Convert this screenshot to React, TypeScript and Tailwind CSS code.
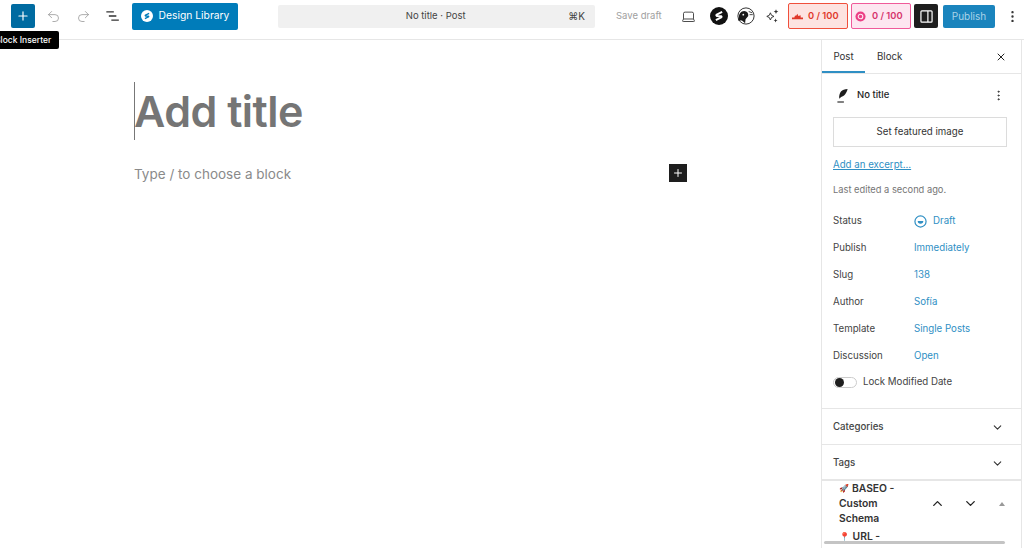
import { Plus, Undo2, Redo2, X, ChevronDown, ChevronUp, MoreVertical, Laptop } from "lucide-react";

const font = { fontFamily: "Inter, sans-serif" };

const rows = [
  ["Publish", "Immediately"],
  ["Slug", "138"],
  ["Author", "Sofía"],
  ["Template", "Single Posts"],
  ["Discussion", "Open"],
];

function Stackable({ className }: { className: string }) {
  return (
    <svg viewBox="0 0 20 20" className={className}>
      <circle cx="10" cy="10" r="10" fill="currentColor" />
      <path d="M13.5 5.5 L7.5 8.5 Q6.5 9.2 7.6 10 L12.3 10.2 Q13.4 10.9 12.4 11.6 L6.5 14.5" fill="none" stroke="white" strokeWidth="2.2" strokeLinejoin="round" />
    </svg>
  );
}

export default function App() {
  return (
    <div className="relative h-[548px] w-[1024px] overflow-hidden bg-white text-[#1e1e1e]" style={font}>
      {/* top bar */}
      <header className="flex h-10 items-center border-b border-[#e6e6e6] pb-[7px]">
        <button className="ml-[11px] flex h-6 w-6 items-center justify-center rounded-[2px] bg-[#006ba1] text-white">
          <Plus size={14} strokeWidth={2} />
        </button>
        <Undo2 size={15} strokeWidth={1.3} className="ml-[11px] text-[#9a9a9a]" />
        <Redo2 size={15} strokeWidth={1.3} className="ml-[15px] text-[#9a9a9a]" />
        <svg viewBox="0 0 16 12" className="ml-[15px] h-[10px] w-[14px] text-[#333]">
          <path d="M0 1h9M3 6h9M6 11h9" stroke="currentColor" strokeWidth="1.6" />
        </svg>
        <button className="ml-[12px] flex h-[27px] w-[106px] items-center justify-center gap-[6px] rounded-[2px] bg-[#007cba] text-[10.3px] text-white">
          <Stackable className="h-3 w-3 text-white [&_path]:stroke-[#007cba]" />
          Design Library
        </button>
        <div className="ml-[40px] flex h-[23px] w-[317px] items-center rounded-[2px] bg-[#f0f0f0] pr-[10px] text-[9.5px] text-[#444]">
          <span className="flex-1 pl-[25px] text-center">No title · Post</span>
          <span className="text-[10px]">⌘K</span>
        </div>
        <span className="ml-[21px] w-[46px] whitespace-nowrap text-[9.5px] text-[#a0a0a0]">Save draft</span>
        <Laptop size={15} strokeWidth={1.4} className="ml-[19px] text-[#333]" />
        <Stackable className="ml-[14px] h-[18px] w-[18px] text-[#111]" />
        <svg viewBox="0 0 20 20" className="ml-[9px] h-[18px] w-[18px]">
          <circle cx="10" cy="10" r="9" fill="none" stroke="#333" strokeWidth="1.1" />
          <path d="M2 12 Q2 5 8 4.5 Q13 5 12.5 10 L9.5 13.5 L9 18 L5.5 15 L1 15 Z" fill="#1a1a1a" />
          <circle cx="7" cy="8.5" r="1" fill="white" />
          <path d="M13 5l4 1.5M14 8.5h3.5" stroke="#333" strokeWidth="1" />
        </svg>
        <svg viewBox="0 0 20 20" className="ml-[9px] h-4 w-4 text-[#333]">
          <path d="M8 6 Q8.5 10 12.5 10.5 Q8.5 11 8 15 Q7.5 11 3.5 10.5 Q7.5 10 8 6Z" fill="none" stroke="currentColor" strokeWidth="1.2" />
          <path d="M15 1.5 Q15.3 4.2 18 4.5 Q15.3 4.8 15 7.5 Q14.7 4.8 12 4.5 Q14.7 4.2 15 1.5Z" fill="currentColor" />
          <path d="M14.5 13 Q14.8 15.2 17 15.5 Q14.8 15.8 14.5 18 Q14.2 15.8 12 15.5 Q14.2 15.2 14.5 13Z" fill="currentColor" />
        </svg>
        <div className="ml-[8px] flex h-[26px] w-[60px] items-center gap-[5px] rounded-[2px] border border-[#f0503c] bg-[#fde3e0] pl-[3px] text-[9.3px] font-semibold text-[#e0392b]">
          <svg viewBox="0 0 14 10" className="h-[8px] w-[11px]">
            <path d="M0 7h3l1-3 1 1 2-3 1 3 3-1 0 3h3v2H0z" fill="currentColor" />
          </svg>
          0 / 100
        </div>
        <div className="ml-[3px] flex h-[26px] w-[60px] items-center gap-[6px] rounded-[2px] border border-[#f05a9a] bg-[#fde6f0] pl-[3px] text-[9.3px] font-semibold text-[#d6336c]">
          <svg viewBox="0 0 12 12" className="h-[11px] w-[11px]">
            <circle cx="6" cy="6" r="5.5" fill="#ec3f85" />
            <circle cx="6" cy="6" r="2.5" fill="none" stroke="#fde6f0" strokeWidth="1.2" />
          </svg>
          0 / 100
        </div>
        <button className="ml-[3px] flex h-6 w-6 items-center justify-center rounded-[2px] bg-[#1e1e1e]">
          <svg viewBox="0 0 14 14" className="h-[13px] w-[13px]">
            <rect x="1" y="1" width="12" height="12" rx="1" fill="none" stroke="white" strokeWidth="1.3" />
            <path d="M8.5 1v12" stroke="white" strokeWidth="1.3" />
          </svg>
        </button>
        <button className="ml-[5px] h-[23px] w-[52px] rounded-[2px] bg-[#1a84bd] text-[10px] text-[#a9d3e8]">Publish</button>
        <MoreVertical size={15} strokeWidth={1.8} className="ml-[10px] text-[#333]" />
      </header>

      <div className="absolute left-[-14px] top-[31px] z-10 flex h-[18px] items-center rounded-[2px] bg-black pl-[9px] pr-[8px] text-[8.5px] font-medium text-white">
        Block Inserter
      </div>

      <div className="flex h-[508px]">
        {/* editor canvas */}
        <main className="relative w-[821px] pl-[134px]">
          <h1 className="mt-[42px] h-[58px] border-l border-[#777] text-[43px] font-semibold leading-[58px] tracking-[-0.5px] text-[#757575]">
            <span className="-ml-[1px]">Add title</span>
          </h1>
          <p className="mt-[24px] text-[13.5px] leading-5 text-[#8a8a8a]">Type / to choose a block</p>
          <button className="absolute left-[669px] top-[124px] flex h-[18px] w-[18px] items-center justify-center bg-[#1e1e1e] text-white">
            <Plus size={12} strokeWidth={2} />
          </button>
        </main>

        {/* settings sidebar */}
        <aside className="w-[201px] border-l border-r border-[#e6e6e6]">
          <div className="flex h-[34px] items-center border-b border-[#e6e6e6] text-[9.7px] text-[#333]">
            <span className="flex h-full w-[43px] items-center justify-center border-b-2 border-[#2f8fc4] pt-[3px]">Post</span>
            <span className="ml-[12px] pt-[1px]">Block</span>
            <X size={12} strokeWidth={2} className="ml-auto mr-[14px] text-[#222]" />
          </div>

          <div className="h-[335px] border-b border-[#e6e6e6] px-[11px]">
            <div className="flex h-[43px] items-center text-[9.5px] font-medium">
              <svg viewBox="0 0 14 16" className="ml-[3px] mr-[8px] h-[15px] w-[13px]">
                <path d="M12.5 1 C6 1 3 5 3.5 11.5 L5.5 9.5 C9 9 11.5 5 12.5 1Z" fill="#1e1e1e" />
                <path d="M1.5 15h7" stroke="#1e1e1e" strokeWidth="1.2" />
              </svg>
              No title
              <MoreVertical size={13} strokeWidth={1.8} className="ml-auto mr-[5px] text-[#333]" />
            </div>
            <button className="flex h-[30px] w-[174px] items-center justify-center border border-[#dcdcdc] text-[9.7px] text-[#333]">
              Set featured image
            </button>
            <a className="mt-[11px] block text-[9.7px] leading-[14px] text-[#2f8fc4] underline">Add an excerpt...</a>
            <p className="mt-[11px] text-[9.3px] leading-[14px] text-[#757575]">Last edited a second ago.</p>

            <div className="mt-[11px] flex h-[27px] items-center text-[9.7px]">
              <span className="w-[81px] text-[#444]">Status</span>
              <svg viewBox="0 0 14 14" className="mr-[6px] h-[13px] w-[13px]">
                <circle cx="7" cy="7" r="6" fill="none" stroke="#2f8fc4" strokeWidth="1.3" />
                <path d="M4 6.5h6a3 3 0 0 1-6 0z" fill="#2f8fc4" />
              </svg>
              <span className="text-[#2f8fc4]">Draft</span>
            </div>
            {rows.map(([label, value]) => (
              <div key={label} className="flex h-[27px] items-center text-[9.7px]">
                <span className="w-[81px] text-[#444]">{label}</span>
                <span className="text-[#2f8fc4]">{value}</span>
              </div>
            ))}
            <div className="-mt-[1px] flex h-[27px] items-center text-[9.7px] text-[#444]">
              <span className="mr-[6px] flex h-[11px] w-[24px] items-center rounded-full border border-[#ccc] pl-[1px]">
                <span className="h-[9px] w-[9px] rounded-full bg-[#1e1e1e]" />
              </span>
              Lock Modified Date
            </div>
          </div>

          <div className="flex h-[36px] items-center justify-between border-b border-[#e6e6e6] pl-[11px] pr-[17px] pt-[1px] text-[9.7px] font-medium text-[#444]">
            Categories
            <ChevronDown size={13} strokeWidth={2} className="text-[#333]" />
          </div>
          <div className="flex h-[36px] items-center justify-between border-b-2 border-[#e6e6e6] pl-[11px] pr-[17px] pt-[2px] text-[9.7px] font-medium text-[#444]">
            Tags
            <ChevronDown size={13} strokeWidth={2} className="text-[#333]" />
          </div>

          <div className="relative flex h-[66px] overflow-hidden pl-[17px]">
            <div className="w-[75px] text-[10.3px] font-semibold leading-[15px] text-[#333]">
              <span className="inline-block w-[13px] align-top text-[8px]">🚀</span>BASEO - Custom Schema
              <div className="mt-[3px]"><span className="text-[9px]">📍</span> URL -</div>
            </div>
            <div className="ml-[16px] flex h-[45px] items-center text-[#222]">
              <ChevronUp size={15} strokeWidth={2.2} />
              <ChevronDown size={15} strokeWidth={2.2} className="ml-[18px]" />
              <span className="ml-[21px] h-0 w-0 border-x-[3px] border-b-[4px] border-x-transparent border-b-[#999]" />
            </div>
            <div className="absolute bottom-[3px] left-[2px] h-[3px] w-[181px] rounded-full bg-[#c4c4c4]" />
          </div>
        </aside>
      </div>
    </div>
  );
}
